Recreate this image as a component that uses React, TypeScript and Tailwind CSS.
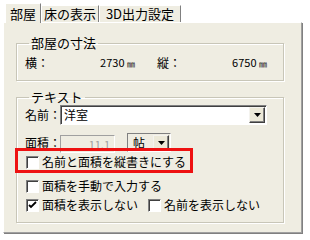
import React from 'react';

const font = { fontFamily: '"Noto Sans CJK JP", "Noto Sans", sans-serif' };

function Checkbox({ checked }: { checked?: boolean }) {
  return (
    <span className="inline-flex items-center justify-center w-[13px] h-[13px] shrink-0 bg-white border border-t-[#808080] border-l-[#808080] border-r-white border-b-white shadow-[inset_1px_1px_0_#404040]">
      {checked && (
        <svg width="9" height="9" viewBox="0 0 9 9">
          <path d="M1 4 L3 6 L8 1" stroke="#000" strokeWidth="1.8" fill="none" />
        </svg>
      )}
    </span>
  );
}

function DropButton({ className = '' }: { className?: string }) {
  return (
    <span
      className={`flex items-center justify-center w-[16px] bg-[#ece9d8] border border-t-[#f4f3ee] border-l-[#f4f3ee] border-r-[#404040] border-b-[#404040] shadow-[inset_-1px_-1px_0_#808080] ${className}`}
    >
      <svg width="7" height="4" viewBox="0 0 7 4">
        <path d="M0 0 H7 L3.5 4 Z" fill="#000" />
      </svg>
    </span>
  );
}

export default function App() {
  return (
    <div className="w-[310px] h-[240px] bg-white text-black text-[12px] leading-[16px] whitespace-nowrap" style={font}>
      <div className="pt-[3px] pl-[3px]">
        {/* Tabs */}
        <div className="flex items-end ml-[2px] h-[19px]">
          <div className="relative z-10 -mb-px h-[20px] w-[36px] bg-[#efede2] border border-b-0 border-t-white border-l-white border-r-[#808080] flex items-center justify-center text-[13px]">
            部屋
          </div>
          <div className="h-[17px] w-[58px] bg-[#efede2] border border-b-0 border-t-white border-l-white border-r-[#808080] flex items-center justify-center text-[13px]">
            床の表示
          </div>
          <div className="h-[17px] w-[82px] bg-[#efede2] border border-b-0 border-t-white border-l-white border-r-[#808080] flex items-center justify-center text-[13px]">
            3D出力設定
          </div>
        </div>

        {/* Panel */}
        <div className="w-[299px] h-[211px] bg-[#efede2] border border-t-white border-l-white border-r-[#a0a0a0] border-b-[#a0a0a0] shadow-[1px_1px_0_#808080] pl-[12px] pt-[13px]">
          <fieldset className="w-[268px] border border-[#c8c6b8] shadow-[1px_1px_0_#fff,inset_1px_1px_0_#fff] pb-[9px] pl-[8px]">
            <legend className="ml-[4px] px-[2px] text-[13px] leading-[14px]">部屋の寸法</legend>
            <div className="flex items-center h-[16px] mt-[5px]">
              <span className="w-[40px] shrink-0">横：</span>
              <span className="w-[70px] text-right text-[11px]">
                2730 <span className="text-[8px]">㎜</span>
              </span>
              <span className="ml-[22px] w-[40px] shrink-0">縦：</span>
              <span className="w-[70px] text-right text-[11px]">
                6750 <span className="text-[8px]">㎜</span>
              </span>
            </div>
          </fieldset>

          <fieldset className="relative mt-[9px] w-[268px] h-[133px] border border-[#c8c6b8] shadow-[1px_1px_0_#fff,inset_1px_1px_0_#fff] pl-[8px]">
            <legend className="ml-[4px] px-[2px] text-[13px] leading-[14px]">テキスト</legend>

            <div className="flex items-center mt-[1px]">
              <span className="w-[35px] shrink-0">名前：</span>
              <div className="flex w-[207px] h-[20px] bg-white border border-t-[#808080] border-l-[#808080] border-r-white border-b-white shadow-[inset_1px_1px_0_#404040]">
                <span className="flex-1 pl-[3px] pt-[1px] leading-[16px]">洋室</span>
                <DropButton className="h-[16px] mt-[1px] mr-[1px]" />
              </div>
            </div>

            <div className="flex items-center mt-[8px] h-[19px]">
              <span className="w-[35px] shrink-0">面積：</span>
              <div className="w-[55px] h-[18px] mt-[2px] border border-t-[#a0a0a0] border-l-[#a0a0a0] border-r-white border-b-white text-right pr-[4px] text-[11px] text-[#a0a0a0] leading-[16px]">
                11.1
              </div>
              <div className="ml-[12px] flex w-[44px] h-[19px] bg-[#efede2] border border-t-[#808080] border-l-[#808080] border-r-white border-b-white">
                <span className="flex-1 pl-[5px] leading-[17px]">帖</span>
                <DropButton className="h-[15px] mt-px mr-px" />
              </div>
            </div>

            <div className="flex items-center h-[16px] mt-[2px] pl-[1px]">
              <Checkbox />
              <span className="ml-[3px]">名前と面積を縦書きにする</span>
            </div>
            <div className="flex items-center h-[16px] mt-[8px] pl-[1px]">
              <Checkbox />
              <span className="ml-[3px]">面積を手動で入力する</span>
            </div>
            <div className="flex items-center h-[16px] mt-[3px] pl-[1px]">
              <Checkbox checked />
              <span className="ml-[3px] w-[96px]">面積を表示しない</span>
              <span className="ml-[10px] flex items-center">
                <Checkbox />
                <span className="ml-[3px]">名前を表示しない</span>
              </span>
            </div>

            {/* red annotation box */}
            <div className="absolute left-[-2px] top-[44px] w-[178px] h-[25px] border-[3px] border-[#ee1111]" />
          </fieldset>
        </div>
      </div>
    </div>
  );
}
